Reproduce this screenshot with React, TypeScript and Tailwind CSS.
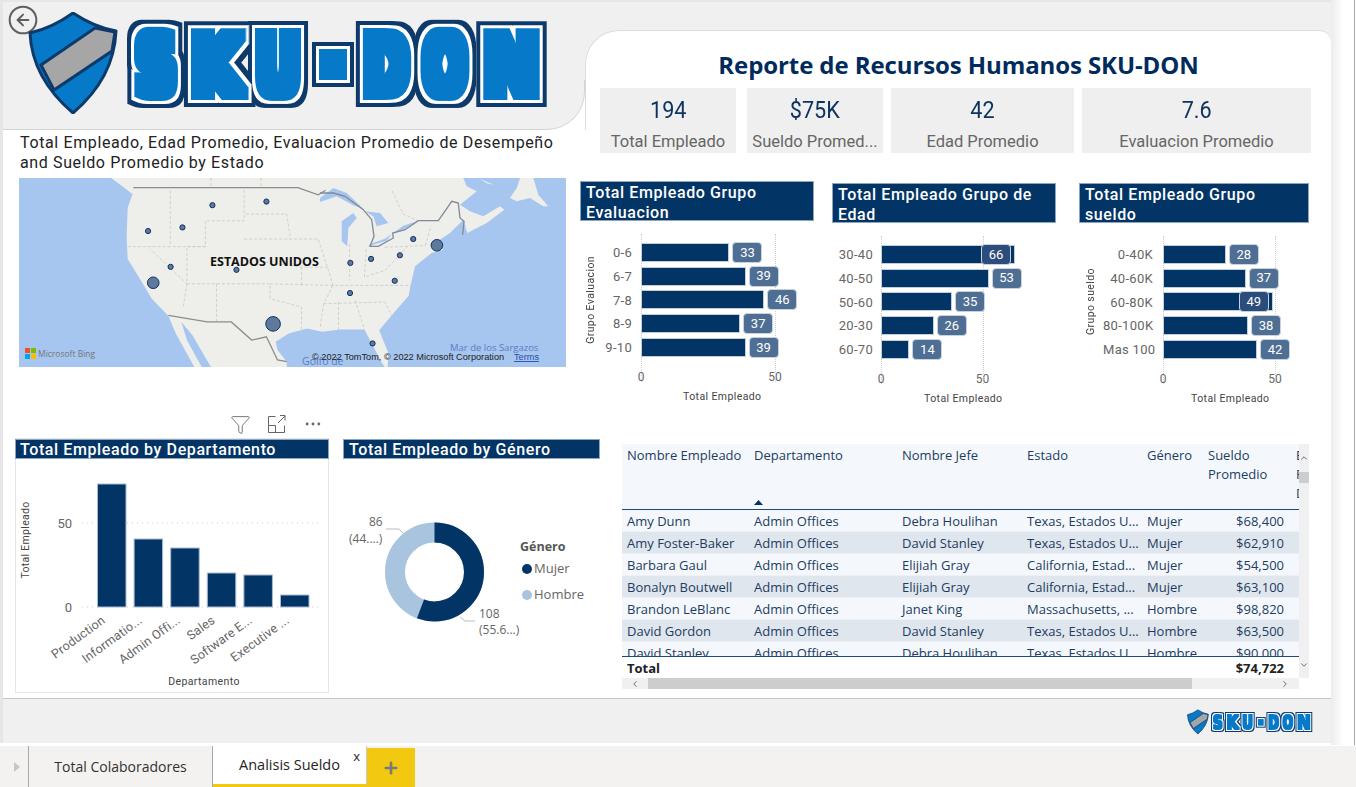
import { ChevronDown, ChevronLeft, ChevronRight, ChevronUp, CircleArrowLeft, Ellipsis, Funnel, Plus } from "lucide-react";

const NAVY = "#023466";

// map outlines are traced on two grids: the whole map, and a 3x crop of the north-east
const toMap = (pts: number[][]) => pts.map(([x, y]) => `${((x - 51) / 2.704).toFixed(1)},${((y - 21) / 3.016).toFixed(1)}`).join(" ");
const toNE = (pts: number[][]) => pts.map(([x, y]) => `${(301 + x / 3).toFixed(1)},${(y / 3).toFixed(1)}`).join(" ");

const landWest = [[300, 21], [335, 50], [358, 70], [345, 110], [342, 200], [345, 265], [378, 325], [410, 385], [455, 437], [475, 490], [510, 560], [525, 591], [775, 591], [775, 575], [750, 540], [745, 515], [780, 490], [830, 475], [870, 485], [920, 478], [985, 478], [1005, 520], [1030, 575], [1040, 591], [1048, 591], [1050, 550], [1025, 480], [1055, 440], [1105, 375]];
const landEast = [[270, 330], [285, 265], [335, 225], [370, 215], [345, 195], [390, 165], [430, 125], [442, 165], [500, 135], [553, 95], [540, 85], [490, 115], [450, 100], [420, 80], [470, 40], [440, 25], [430, 0]];
const lakes = [
  [[0, 60], [40, 30], [80, 45], [130, 92], [100, 82], [50, 55], [0, 72]],
  [[65, 130], [100, 105], [110, 120], [85, 150], [82, 205], [65, 190]],
  [[135, 100], [180, 105], [205, 135], [170, 145], [160, 115]],
  [[145, 205], [200, 188], [215, 168], [195, 182], [150, 198]],
  [[220, 165], [255, 152], [295, 128], [250, 143]],
];
const borderNE = [[0, 45], [40, 45], [75, 55], [130, 95], [155, 125], [162, 175], [150, 205], [175, 205], [220, 180], [218, 165], [255, 155], [295, 128], [355, 128], [385, 85], [395, 70], [415, 75], [420, 120], [432, 130], [428, 170]];
const borderWest = [[[360, 50], [805, 50], [860, 72], [880, 58]], [[455, 435], [560, 455], [625, 455], [680, 510], [720, 500], [750, 570], [775, 575]]];
const stateLines = [
  [[460, 60], [460, 225]], [[345, 228], [555, 228], [555, 150], [660, 150], [660, 50]], [[555, 228], [505, 228], [505, 340], [405, 235]],
  [[505, 340], [495, 410]], [[585, 340], [585, 455]], [[505, 340], [730, 340], [730, 385], [815, 410], [815, 490]], [[660, 205], [860, 205], [885, 290], [900, 345], [1110, 345]],
  [[730, 340], [900, 345]], [[665, 130], [775, 130], [785, 205]], [[815, 290], [815, 345]], [[690, 270], [815, 290], [885, 290]], [[875, 400], [1040, 395], [1060, 440]],
  [[875, 400], [865, 475]], [[915, 395], [915, 480]], [[960, 390], [985, 478]], [[900, 345], [875, 400]], [[945, 220], [945, 330]], [[990, 235], [985, 320], [1040, 300], [1100, 230]],
  [[1040, 230], [1150, 225]], [[1150, 225], [1165, 165]], [[570, 21], [570, 50]], [[705, 21], [705, 50]], [[1060, 60], [1090, 130], [1130, 150]],
];
const bubbles = [[400, 181, 2.6], [493, 170, 2.6], [574, 103, 2.6], [720, 92, 2.6], [461, 289, 2.6], [639, 298, 2.6], [947, 277, 2.6], [1003, 265, 2.6], [1081, 254, 2.6], [1117, 205, 2.6], [1067, 331, 2.6], [946, 368, 2.6], [1007, 520, 2.6], [414, 337, 5.8], [1181, 224, 5.8], [738, 461, 7.3]];

const MapVisual = () => (
  <svg width="547" height="189" className="block bg-[#a6c5ef]">
    <polygon points={`${toMap(landWest)} ${toNE(landEast)}`} fill="#eeeeea" />
    <polygon points={toNE([[570, 60], [590, 30], [600, 0], [640, 0], [655, 50], [685, 85], [670, 85], [630, 60], [590, 70]])} fill="#eeeeea" />
    <polygon points={toNE([[480, 3], [522, 20], [500, 16]])} fill="#eeeeea" />
    <polygon points={toMap([[490, 455], [520, 495], [570, 591], [545, 591], [505, 510]])} fill="#a6c5ef" />
    {lakes.map((w, i) => <polygon key={i} points={toNE(w)} fill="#a6c5ef" />)}
    {stateLines.map((l, i) => <polyline key={i} points={toMap(l)} fill="none" stroke="#c9c9c3" strokeWidth="0.8" strokeDasharray="3 2" />)}
    {borderWest.map((l, i) => <polyline key={i} points={toMap(l)} fill="none" stroke="#8c8c8c" strokeWidth="1.3" />)}
    <polyline points={toNE(borderNE)} fill="none" stroke="#7f8a94" strokeWidth="1.3" />
    <text x="191" y="88" fontFamily="Open Sans" fontWeight="700" fontSize="12.5" fill="#111">ESTADOS UNIDOS</text>
    {bubbles.map(([x, y, r], i) => <circle key={i} cx={(x - 51) / 2.704} cy={(y - 21) / 3.016} r={r} fill="#5d7a9e" stroke="#12305e" />)}
    <text x="431" y="173" fontFamily="Open Sans" fontSize="9.5" fill="#5b7cc4">Mar de los Sargazos</text>
    <text x="283" y="187" fontFamily="Open Sans" fontSize="10.5" fill="#5b7cc4">Golfo de</text>
    <text x="293" y="182" fontFamily="Liberation Sans" fontSize="9.2" fill="#222">© 2022 TomTom, © 2022 Microsoft Corporation</text>
    <text x="495" y="182" fontFamily="Liberation Sans" fontSize="9.2" fill="#2b4fa8" textDecoration="underline">Terms</text>
    <rect x="6" y="170" width="5" height="5" fill="#f25022" />
    <rect x="12" y="170" width="5" height="5" fill="#7fba00" />
    <rect x="6" y="176" width="5" height="5" fill="#00a4ef" />
    <rect x="12" y="176" width="5" height="5" fill="#ffb900" />
    <text x="19" y="179" fontFamily="Open Sans" fontSize="8.5" fill="#777">Microsoft Bing</text>
  </svg>
);

const logoLetters: [string, number, number][] = [["S", 136, 40], ["K", 191, 50], ["U", 256, 44], ["D", 364, 44], ["O", 424, 42], ["N", 483, 57]];

// the outlined wordmark: one text, thickened in three colours by a filter
const Logo = ({ className, id }: { className: string; id: string }) => (
  <svg viewBox="28 12 525 102" className={className}>
    <defs>
      <filter id={id} filterUnits="userSpaceOnUse" x="110" y="5" width="450" height="115" colorInterpolationFilters="sRGB">
        <feMorphology in="SourceAlpha" operator="dilate" radius="13" result="a" />
        <feFlood floodColor="#0d3a6a" />
        <feComposite in2="a" operator="in" result="navy" />
        <feMorphology in="SourceAlpha" operator="dilate" radius="8.500" result="b" />
        <feFlood floodColor="#ffffff" />
        <feComposite in2="b" operator="in" result="white" />
        <feMorphology in="SourceAlpha" operator="dilate" radius="6" result="c" />
        <feFlood floodColor="#0679c9" />
        <feComposite in2="c" operator="in" result="blue" />
        <feMerge>
          <feMergeNode in="navy" />
          <feMergeNode in="white" />
          <feMergeNode in="blue" />
        </feMerge>
      </filter>
    </defs>
    <path d="M73 13 Q52 28 30 33 Q32 78 73 113 Q114 78 116 31 Q94 27 73 13Z" fill="#0679c9" stroke="#0d3a6a" strokeWidth="3" strokeLinejoin="round" />
    <polygon points="95,28 115,32 112,51 54,90 41,65" fill="#a6a6a6" stroke="#0d3a6a" strokeWidth="3" />
    <g filter={`url(#${id})`} fontFamily="DejaVu Sans" fontWeight="700" fontSize="82">
      {logoLetters.map(([ch, x, w]) => (
        <text key={ch} x={x} y="94" textLength={w} lengthAdjust="spacingAndGlyphs">{ch}</text>
      ))}
      <rect x="325" y="55" width="16" height="19" />
    </g>
  </svg>
);

const kpis = [
  { value: "194", label: "Total Empleado", cls: "w-[136px] mr-[11px]" },
  { value: "$75K", label: "Sueldo Promed...", cls: "w-[136px] mr-[8px]" },
  { value: "42", label: "Edad Promedio", cls: "w-[183px] mr-[8px]" },
  { value: "7.6", label: "Evaluacion Promedio", cls: "w-[229px]" },
];

type BarRow = { label: string; value: number; inside?: boolean };

const VisualTitle = ({ children, className }: { children: React.ReactNode; className: string }) => (
  <div className={`border border-[#8fa5bf] bg-[#023466] text-[16px] font-medium leading-[20px] tracking-[0.6px] text-white ${className}`}>
    {children}
  </div>
);

const BarRows = ({ yTitle, yCls, labelCls, scale, rows }: { yTitle?: string; yCls: string; labelCls: string; scale: number; rows: BarRow[] }) => (
  <div className="flex">
    <div className={`flex items-center justify-center ${yCls}`}>
      {yTitle && <span className="rotate-180 whitespace-nowrap text-[10.5px] tracking-[0.4px] text-[#444] [writing-mode:vertical-rl]">{yTitle}</span>}
    </div>
    <div className="relative flex flex-col gap-[4.7px]">
      {rows.map((r) => (
        <div key={r.label} className="flex h-[19px] items-center">
          <div className={`whitespace-nowrap pt-[1px] text-right text-[13px] tracking-[0.3px] text-[#666] ${labelCls}`}>{r.label}</div>
          <div className="h-[19px] border border-[#c3cedb] bg-[#023466]" style={{ width: r.value * scale }} />
          <div className={`z-10 flex h-[21px] w-[30px] items-center justify-center rounded-[4px] border border-[#c8d3df] text-[13px] text-white ${r.inside ? "-ml-[34px] bg-[#2c4d7b]" : "ml-[3px] bg-[#4f6e93]"}`}>
            {r.value}
          </div>
        </div>
      ))}
    </div>
  </div>
);

const Ticks = ({ scale, cls }: { scale: number; cls: string }) => (
  <div className={`mt-[11px] flex justify-between text-[12px] text-[#666] ${cls}`} style={{ width: 50 * scale + 20 }}>
    <span className="w-[20px] text-center">0</span>
    <span className="w-[20px] text-center">50</span>
  </div>
);

const gridLine = "absolute top-[-9px] h-[148px] border-l border-dotted border-[#cfcfcf]";

const charts = [
  {
    title: "Total Empleado Grupo Evaluacion", width: "w-[234px] mt-[51px]", yTitle: "Grupo Evaluacion", yCls: "w-[22px]", labelCls: "w-[39px] pr-[9px]", scale: 2.68, tick: "ml-[51px]", xCls: "pl-[103px]", grid: ["left-[61px]", "left-[195px]"],
    rows: [{ label: "0-6", value: 33 }, { label: "6-7", value: 39 }, { label: "7-8", value: 46 }, { label: "8-9", value: 37 }, { label: "9-10", value: 39 }],
  },
  {
    title: "Total Empleado Grupo de Edad", width: "w-[224px] mt-[53px] ml-[18px]", yCls: "w-0", labelCls: "w-[49px] pr-[8px]", scale: 2.03, tick: "ml-[39px]", xCls: "pl-[92px]", grid: ["left-[49px]", "left-[151px]"],
    rows: [{ label: "30-40", value: 66, inside: true }, { label: "40-50", value: 53 }, { label: "50-60", value: 35 }, { label: "20-30", value: 26 }, { label: "60-70", value: 14 }],
  },
  {
    title: "Total Empleado Grupo sueldo", width: "w-[230px] mt-[53px] ml-[23px]", yTitle: "Grupo sueldo", yCls: "w-[24px]", labelCls: "w-[60px] pr-[10px]", scale: 2.24, tick: "ml-[74px]", xCls: "pl-[112px]", grid: ["left-[84px]", "left-[196px]"],
    rows: [{ label: "0-40K", value: 28 }, { label: "40-60K", value: 37 }, { label: "60-80K", value: 49, inside: true }, { label: "80-100K", value: 38 }, { label: "Mas 100", value: 42 }],
  },
];

const columns = [
  { label: "Production", h: 123, ex: 106 },
  { label: "Informatio...", h: 68, ex: 143 },
  { label: "Admin Offi...", h: 59, ex: 181 },
  { label: "Sales", h: 34, ex: 216 },
  { label: "Software E...", h: 32, ex: 253 },
  { label: "Executive ...", h: 12, ex: 290 },
];

const ColumnChart = () => (
  <svg viewBox="16 459 312 233" width="312" height="233" className="block">
    <line x1="82" x2="320" y1="523" y2="523" stroke="#cfcfcf" strokeDasharray="1 4" />
    <line x1="82" x2="320" y1="607" y2="607" stroke="#cfcfcf" strokeDasharray="1 4" />
    <text x="72" y="528" textAnchor="end" fontSize="13" fill="#666">50</text>
    <text x="72" y="612" textAnchor="end" fontSize="13" fill="#666">0</text>
    <text transform="translate(29 540) rotate(-90)" textAnchor="middle" fontSize="10.5" letterSpacing="0.3" fill="#444">Total Empleado</text>
    {columns.map((c, i) => (
      <g key={c.label}>
        <rect x={97.5 + i * 36.6} y={607 - c.h} width="28.5" height={c.h} fill={NAVY} stroke="#a9bbd0" />
        <text transform={`translate(${c.ex} 622) rotate(-36)`} textAnchor="end" fontSize="12.5" letterSpacing="0.2" fill="#666">{c.label}</text>
      </g>
    ))}
    <text x="204" y="685" textAnchor="middle" fontSize="10.5" letterSpacing="0.4" fill="#444">Departamento</text>
  </svg>
);

const DonutChart = () => (
  <svg viewBox="343 459 257 190" width="257" height="190" className="block">
    <circle cx="434.5" cy="572" r="39.5" fill="none" stroke="#a8c4de" strokeWidth="20" />
    <circle cx="434.5" cy="572" r="39.5" fill="none" stroke={NAVY} strokeWidth="20" strokeDasharray="138.2 300" transform="rotate(-90 434.5 572)" />
    <polyline points="386,529 399,529 403,533" fill="none" stroke="#bbb" />
    <polyline points="460,617 465,621 475,621" fill="none" stroke="#bbb" />
    <g fontFamily="Open Sans" fontSize="12" fill="#666">
      <text x="369" y="526">86</text>
      <text x="349" y="543">(44....)</text>
      <text x="479" y="618">108</text>
      <text x="479" y="634">(55.6...)</text>
      <text x="534" y="573" fontSize="13">Mujer</text>
      <text x="534" y="599" fontSize="13">Hombre</text>
      <text x="520" y="551" fontSize="12.5" fontWeight="700" fill="#555">Género</text>
    </g>
    <circle cx="527" cy="569" r="5" fill={NAVY} />
    <circle cx="527" cy="595" r="5" fill="#a8c4de" />
  </svg>
);

const rowsData = [
  ["Amy Dunn", "Admin Offices", "Debra Houlihan", "Texas, Estados U...", "Mujer", "$68,400"],
  ["Amy Foster-Baker", "Admin Offices", "David Stanley", "Texas, Estados U...", "Mujer", "$62,910"],
  ["Barbara Gaul", "Admin Offices", "Elijiah Gray", "California, Estad...", "Mujer", "$54,500"],
  ["Bonalyn Boutwell", "Admin Offices", "Elijiah Gray", "California, Estad...", "Mujer", "$63,100"],
  ["Brandon LeBlanc", "Admin Offices", "Janet King", "Massachusetts, ...", "Hombre", "$98,820"],
  ["David Gordon", "Admin Offices", "David Stanley", "Texas, Estados U...", "Hombre", "$63,500"],
  ["David Stanley", "Admin Offices", "Debra Houlihan", "Texas, Estados U...", "Hombre", "$90,000"],
];

const colGrid = "grid grid-cols-[127px_148px_125px_120px_61px_88px_8px]";

const EmployeeTable = () => (
  <div className="flex font-['Open_Sans',sans-serif] text-[13px] text-[#1d3c60]">
    <div className="w-[677px]">
      <div className={`${colGrid} h-[66px] border-b border-[#1f4a78] bg-[#f4f8fd] leading-[19px]`}>
        <div className="whitespace-nowrap pl-[5px] pt-[2px]">Nombre Empleado</div>
        <div className="flex flex-col justify-between pb-[4px] pl-[5px] pt-[2px]">
          <span>Departamento</span>
          <svg width="9" height="5" viewBox="0 0 9 5"><polygon points="0,5 9,5 4.5,0" fill={NAVY} /></svg>
        </div>
        <div className="pl-[5px] pt-[2px]">Nombre Jefe</div>
        <div className="pl-[5px] pt-[2px]">Estado</div>
        <div className="pl-[5px] pt-[2px]">Género</div>
        <div className="pl-[5px] pt-[2px]">Sueldo Promedio</div>
        <div className="overflow-hidden whitespace-nowrap pl-[5px] pt-[2px]">Evaluacion<br />Promedio<br />Desempeño</div>
      </div>
      <div className="h-[147px] overflow-hidden border-b border-[#1f4a78]">
        {rowsData.map((r, i) => (
          <div key={r[0]} className={`${colGrid} h-[22px] items-center border-b border-[#edf1f6] pt-[2px] ${i % 2 ? "bg-[#e0e6ee]" : "bg-[#f4f8fd]"}`}>
            {r.map((c, j) => (
              <div key={j} className={`whitespace-nowrap pl-[5px] ${j === 5 ? "pr-[7px] text-right" : "pr-[5px]"}`}>{c}</div>
            ))}
            <div />
          </div>
        ))}
      </div>
      <div className="flex h-[21px] items-center justify-between pl-[5px] pr-[15px] pt-[2px] font-bold text-[#222]">
        <span>Total</span>
        <span>$74,722</span>
      </div>
      <div className="flex h-[11px] items-center bg-[#f0f0f0] text-[#555]">
        <div className="flex w-[26px] justify-center"><ChevronLeft size={10} /></div>
        <div className="h-full w-[544px] bg-[#cdcdcd]" />
        <div className="ml-auto mr-[9px]"><ChevronRight size={10} /></div>
      </div>
    </div>
    <div className="flex h-[234px] w-[10px] flex-col items-center bg-[#f0f0f0] text-[#555]">
      <ChevronUp size={10} className="mt-[9px]" />
      <div className="mt-[9px] h-[11px] w-full bg-[#cdcdcd]" />
      <ChevronDown size={10} className="mb-[8px] mt-auto" />
    </div>
  </div>
);

export default function App() {
  return (
    <div className="relative flex h-[787px] w-[1356px] flex-col overflow-hidden bg-white font-['Roboto',sans-serif]">
      <div className="flex h-[746px]">
        <div className="flex h-[743px] w-[1331px] flex-col border-l-[3px] border-t-[2px] border-[#e6e6e6] bg-white">
          {/* upper part */}
          <div className="flex h-[408px]">
            <div className="w-[582px]">
              <div className="h-[78px] bg-[#f0f0f0] pl-[25px] pt-[10px]">
                <div className="relative z-10"><Logo id="logo-big" className="block h-[102px] w-[525px]" /></div>
              </div>
              <div className="h-[50px] rounded-br-[38px] border-b border-r border-[#d4d4d4] bg-[#f0f0f0]" />
              <div className="h-[48px] pl-[17px] pt-[3px] text-[16px] leading-[20px] tracking-[0.62px] text-[#222]">
                Total Empleado, Edad Promedio, Evaluacion Promedio de Desempeño<br />and Sueldo Promedio by Estado
              </div>
              <div className="ml-[16px]"><MapVisual /></div>
            </div>
            <div className="w-[746px]">
              <div className="h-[128px] bg-[#f0f0f0] pt-[28px]">
                <div className="h-[100px] rounded-tl-[34px] rounded-tr-[12px] border-l border-t border-[#dcdcdc] bg-white">
                  <div className="pt-[17px] text-center font-['Open_Sans',sans-serif] text-[24px] font-bold leading-[34px] tracking-[-0.1px] text-[#002b5c]">
                    Reporte de Recursos Humanos SKU-DON
                  </div>
                  <div className="mt-[6px] flex pl-[14px]">
                    {kpis.map((k) => (
                      <div key={k.label} className={`flex h-[65px] flex-col items-center overflow-hidden bg-[#efefef] ${k.cls}`}>
                        <div className="mt-[7px] scale-x-90 text-[24px] leading-[30px] text-[#0f3460]">{k.value}</div>
                        <div className="mt-[6px] whitespace-nowrap text-[16.5px] leading-[22px] text-[#666]">{k.label}</div>
                      </div>
                    ))}
                  </div>
                </div>
              </div>
              <div className="-ml-[5px] flex">
                {charts.map((c) => (
                  <div key={c.title} className={c.width}>
                    <VisualTitle className="h-[40px] pl-[5px] pt-px">{c.title}</VisualTitle>
                    <div className="relative mt-[22px]">
                      <div className={`${gridLine} ${c.grid[0]}`} />
                      <div className={`${gridLine} ${c.grid[1]}`} />
                      <BarRows yTitle={c.yTitle} yCls={c.yCls} labelCls={c.labelCls} scale={c.scale} rows={c.rows} />
                    </div>
                    <Ticks scale={c.scale} cls={c.tick} />
                    <div className={`mt-[4px] text-[10.5px] leading-[14px] tracking-[0.4px] text-[#444] ${c.xCls}`}>Total Empleado</div>
                  </div>
                ))}
              </div>
            </div>
          </div>
          {/* lower part */}
          <div className="flex h-[288px]">
            <div className="ml-[12px] w-[314px]">
              <div className="flex h-[28px] items-center justify-end gap-[17px] pr-[6px] text-[#666]">
                <Funnel size={21} strokeWidth={1} />
                <svg width="18" height="18" viewBox="0 0 18 18" fill="none" stroke="currentColor"><path d="M7.500 1.500H.5v16h16v-7M.5 10.500h7v7M10 8l7-7M12 .5h5v5" /></svg>
                <Ellipsis size={20} strokeWidth={1.5} />
              </div>
              <div className="h-[255px] border border-[#e6e6e6]">
                <VisualTitle className="-mx-px h-[20px] pl-[4px]">Total Empleado by Departamento</VisualTitle>
                <ColumnChart />
              </div>
            </div>
            <div className="ml-[14px] w-[257px] pt-[29px]">
              <VisualTitle className="h-[20px] pl-[5px]">Total Empleado by Género</VisualTitle>
              <DonutChart />
            </div>
            <div className="ml-[22px] pt-[34px]">
              <EmployeeTable />
            </div>
          </div>
          {/* footer */}
          <div className="flex h-[45px] justify-end border-t border-[#c8c8c8] bg-[#f0f0f0] pr-[17px] pt-[10px]">
            <Logo id="logo-small" className="block h-[26px] w-[127px]" />
          </div>
        </div>
        <div className="flex h-[745px] w-[25px] bg-gradient-to-r from-[#ececec] via-white to-white">
          <div className="ml-[23px] h-full w-px bg-[#a8a8a8]" />
        </div>
      </div>
      {/* tabs */}
      <div className="flex h-[41px] items-stretch bg-[#f3f2f1] font-['Open_Sans',sans-serif]">
        <div className="flex w-[28px] items-center pl-[14px]">
          <div className="h-0 w-0 border-y-[5px] border-l-[6px] border-y-transparent border-l-[#c8c6c4]" />
        </div>
        <div className="flex w-[185px] items-center justify-center border-x border-[#a8a8a8] text-[14px] text-[#323130]">Total Colaboradores</div>
        <div className="relative flex w-[154px] items-center justify-center border-b-[3px] border-r border-b-[#f2c811] border-r-[#c8c8c8] bg-white text-[14.5px] text-[#252423]">
          Analisis Sueldo
          <span className="absolute right-[6px] top-[2px] text-[13px] font-medium leading-[16px]">x</span>
        </div>
        <div className="mt-[2px] flex w-[48px] items-center justify-center bg-[#f2c811] text-[#7a7a7a]">
          <Plus size={18} strokeWidth={3.5} />
        </div>
      </div>
      <div className="absolute left-[7px] top-[4px] text-[#605e5c]">
        <CircleArrowLeft size={32} strokeWidth={1.5} />
      </div>
    </div>
  );
}
